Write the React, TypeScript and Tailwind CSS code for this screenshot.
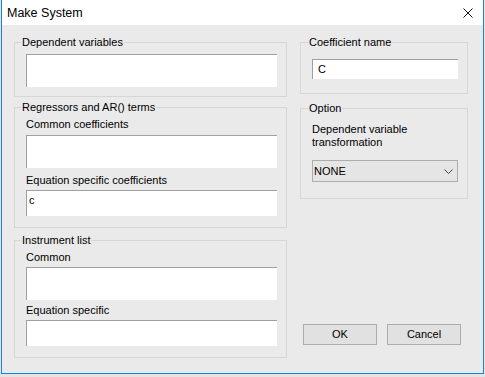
import React from 'react';

const font = { fontFamily: '"Liberation Sans", Arial, sans-serif' };

function Group({ title, className, legendClass, children }: { title: string; className: string; legendClass: string; children: React.ReactNode }) {
    return (
        <fieldset className={"border border-[#d6d6d6] " + className}>
            <legend className={"px-[1px] text-[11px] leading-[14px] text-black " + legendClass}>{title}</legend>
            {children}
        </fieldset>
    );
}

function TextBox({ className, value }: { className: string; value?: string }) {
    return (
        <div className={"bg-white border-t border-l border-[#a0a0a0] text-[11px] text-black " + className}>
            {value && <span>{value}</span>}
        </div>
    );
}

function Label({ text, className }: { text: string; className: string }) {
    return <div className={"text-[11px] leading-[16px] text-black " + className}>{text}</div>;
}

export default function App() {
    return (
        <div className="w-[485px] h-[377px] bg-[#e4e4e4]" style={font}>
            <div className="ml-[1px] w-[483px] h-[374px] border-x border-b border-[#1883d7] bg-[#eaeaea] flex flex-col">
                <div className="h-[25px] bg-white flex items-center justify-between pl-[5px] pr-[10px]">
                    <span className="text-[12.5px] leading-[16px] text-black">Make System</span>
                    <svg width="10" height="10" viewBox="0 0 10 10">
                        <path d="M0.5 0.5 L9.5 9.5 M9.5 0.5 L0.5 9.5" stroke="#111" strokeWidth="1" fill="none" />
                    </svg>
                </div>

                <div className="flex pl-[12px] pt-[10px] gap-[13px]">
                    <div className="w-[273px] flex flex-col">
                        <Group title="Dependent variables" className="pl-[11px] pb-[9px]" legendClass="ml-[-5px]">
                            <TextBox className="mt-[5px] w-[251px] h-[33px]" />
                        </Group>

                        <Group title="Regressors and AR() terms" className="mt-[3px] pl-[11px] pb-[11px]" legendClass="ml-[-5px]">
                            <Label text="Common coefficients" className="mt-[2px]" />
                            <TextBox className="mt-[3px] w-[251px] h-[33px]" />
                            <Label text="Equation specific coefficients" className="mt-[4px]" />
                            <TextBox className="mt-[2px] w-[251px] h-[26px] pl-[2px] pt-[1px] leading-[16px]" value="c" />
                        </Group>

                        <Group title="Instrument list" className="mt-[5px] pl-[11px] pb-[11px]" legendClass="ml-[-5px]">
                            <Label text="Common" className="mt-[2px]" />
                            <TextBox className="mt-[2px] w-[251px] h-[33px]" />
                            <Label text="Equation specific" className="mt-[2px]" />
                            <TextBox className="mt-[2px] w-[251px] h-[26px]" />
                        </Group>
                    </div>

                    <div className="w-[168px] flex flex-col">
                        <Group title="Coefficient name" className="pl-[11px] pb-[14px]" legendClass="ml-[-4px]">
                            <TextBox className="mt-[10px] w-[146px] h-[20px] pl-[5px] flex items-center" value="C" />
                        </Group>

                        <Group title="Option" className="mt-[7px] pl-[11px] pb-[16px]" legendClass="ml-[-4px]">
                            <div className="mt-[8px] text-[11px] leading-[13px] text-black">
                                <div>Dependent variable</div>
                                <div>transformation</div>
                            </div>
                            <div className="mt-[11px] w-[146px] h-[22px] border border-[#adadad] bg-[#e5e5e5] flex items-center justify-between pl-[1px] pr-[4px]">
                                <span className="text-[11px] text-black">NONE</span>
                                <svg width="9" height="5" viewBox="0 0 9 5">
                                    <path d="M0.5 0.5 L4.5 4.5 L8.5 0.5" stroke="#444" strokeWidth="1" fill="none" />
                                </svg>
                            </div>
                        </Group>

                        <div className="mt-[125px] ml-[3px] flex gap-[10px]">
                            <button className="w-[74px] h-[21px] border border-[#adadad] bg-[#e1e1e1] text-[11px] text-black">OK</button>
                            <button className="w-[74px] h-[21px] border border-[#adadad] bg-[#e1e1e1] text-[11px] text-black">Cancel</button>
                        </div>
                    </div>
                </div>
            </div>
        </div>
    );
}
